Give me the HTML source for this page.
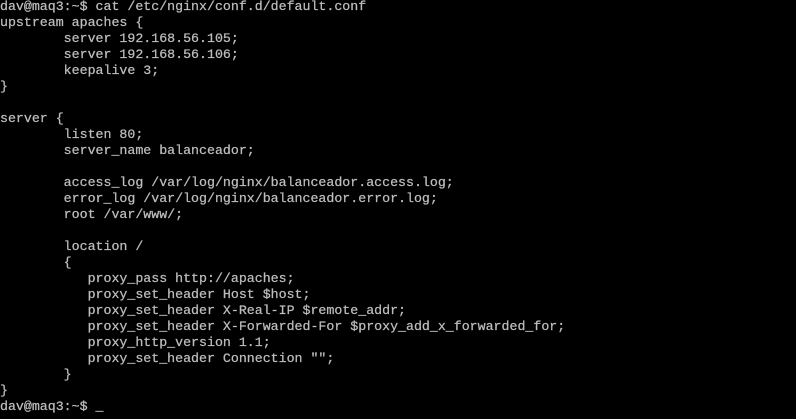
<!DOCTYPE html>
<html><head><meta charset="utf-8"><style>
html,body{margin:0;padding:0;background:#000;width:796px;height:419px;overflow:hidden}
pre{margin:0;position:absolute;left:0;top:-1px;font-family:"Liberation Mono","DejaVu Sans Mono",monospace;font-size:13.27px;line-height:16px;color:#bdbdbd;tab-size:8;white-space:pre;-webkit-text-stroke:0.25px #bdbdbd}
</style></head><body><pre>dav@maq3:~$ cat /etc/nginx/conf.d/default.conf
upstream apaches {
        server 192.168.56.105;
        server 192.168.56.106;
        keepalive 3;
}

server {
        listen 80;
        server_name balanceador;

        access_log /var/log/nginx/balanceador.access.log;
        error_log /var/log/nginx/balanceador.error.log;
        root /var/www/;

        location /
        {
           proxy_pass http://apaches;
           proxy_set_header Host $host;
           proxy_set_header X-Real-IP $remote_addr;
           proxy_set_header X-Forwarded-For $proxy_add_x_forwarded_for;
           proxy_http_version 1.1;
           proxy_set_header Connection "";
        }
}
dav@maq3:~$ _</pre></body></html>
